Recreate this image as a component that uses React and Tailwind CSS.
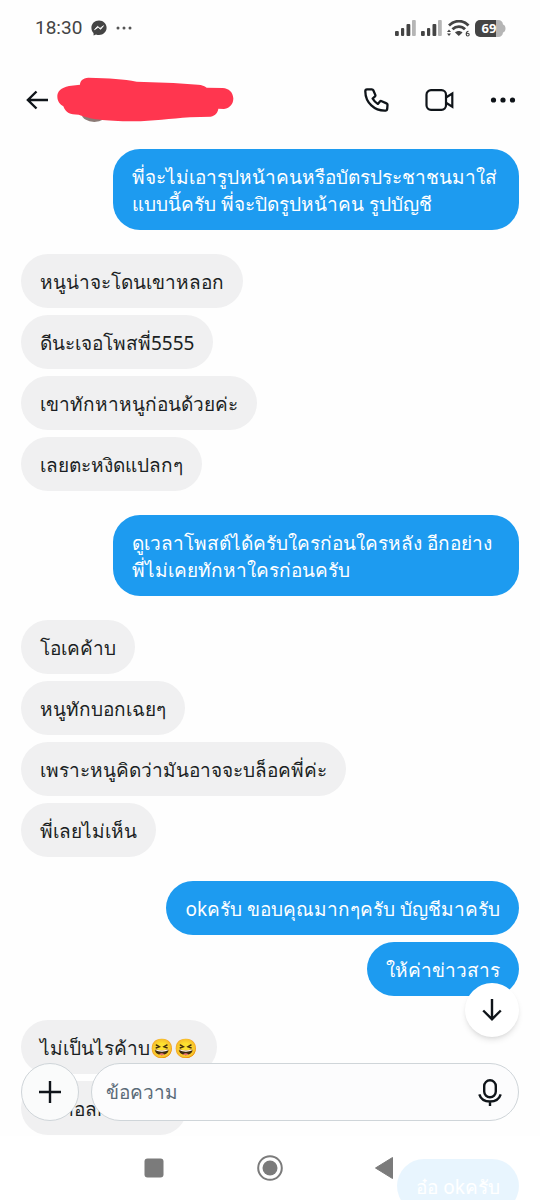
import React from "react";

const groups = [
  { mine: true, items: [["พี่จะไม่เอารูปหน้าคนหรือบัตรประชาชนมาใส่", "แบบนี้ครับ พี่จะปิดรูปหน้าคน รูปบัญชี"]] },
  { mine: false, items: [["หนูน่าจะโดนเขาหลอก"], ["ดีนะเจอโพสพี่5555"], ["เขาทักหาหนูก่อนด้วยค่ะ"], ["เลยตะหงิดแปลกๆ"]] },
  { mine: true, items: [["ดูเวลาโพสต์ได้ครับใครก่อนใครหลัง อีกอย่าง", "พี่ไม่เคยทักหาใครก่อนครับ"]] },
  { mine: false, items: [["โอเคค้าบ"], ["หนูทักบอกเฉยๆ"], ["เพราะหนูคิดว่ามันอาจจะบล็อคพี่ค่ะ"], ["พี่เลยไม่เห็น"]] },
  { mine: true, items: [["okครับ ขอบคุณมากๆครับ บัญชีมาครับ"], ["ให้ค่าข่าวสาร"]] },
  { mine: false, items: [["ไม่เป็นไรค้าบ😆😆"], ["รบกอลกันนะคะ"]] },
  { mine: true, items: [["อ๋อ okครับ"]] },
];

function Bubble({ mine, lines }) {
  const side = mine ? "self-end bg-[#1d9bf0] text-white" : "self-start bg-[#f0f0f1] text-[#1b1f23]";
  const width = lines.length > 1 ? "w-full max-w-[406px]" : "max-w-full";
  return (
    <li className={`rounded-[27px] px-[19px] pt-[15px] pb-3 whitespace-nowrap ${side} ${width}`}>
      {lines.map((line) => (
        <p key={line}>{line}</p>
      ))}
    </li>
  );
}

function Signal() {
  return (
    <svg viewBox="0 0 21 17" className="h-[17px] w-[21px]" fill="#444">
      <rect x="0" y="11" width="3.800" height="5" rx="1" />
      <rect x="6" y="8" width="3.200" height="8" rx="1" />
      <rect x="11.500" y="4" width="3.800" height="12" rx="1" />
      <rect x="17" y="0" width="3.800" height="16" rx="1" fill="#b5b5b5" />
    </svg>
  );
}

function StatusBar() {
  return (
    <div className="flex h-14 items-center pr-[34px] pl-[35px]">
      <span className="font-['Roboto',sans-serif] text-[19px] leading-6 text-[#444]">18:30</span>
      <svg viewBox="0 0 16 16" className="ml-[9px] size-4" role="img" aria-label="Messenger">
        <path d="M8 .5C3.600.5.4 3.700.4 7.800c0 2.200.8 3.900 2.100 5.200l.1 2.500 2.400-1c1 .4 2 .5 3 .5 4.400 0 7.600-3.200 7.600-7.200S12.400.5 8 .5z" fill="#444" />
        <path d="M3.500 9.700 6.500 6.300 9 8.400 12.500 5.700 9.700 9.300 7.200 7.300z" fill="#fff" stroke="#fff" strokeWidth=".8" strokeLinejoin="round" />
      </svg>
      <svg viewBox="0 0 16 4" className="ml-[9px] h-1 w-4" fill="#555">
        <circle cx="2" cy="2" r="1.500" />
        <circle cx="8" cy="2" r="1.500" />
        <circle cx="14" cy="2" r="1.500" />
      </svg>
      <div className="ml-auto flex items-center gap-[5px]">
        <Signal />
        <Signal />
        <svg viewBox="0 0 23 17" className="h-[17px] w-[23px]">
          <path d="M2 5.500C8-.3 16-.3 21.500 5.500" fill="none" stroke="#444" strokeWidth="2.800" />
          <path d="M5.500 9.300c3.700-3.700 9-3.700 12.500 0" fill="none" stroke="#444" strokeWidth="2.800" />
          <path d="M8 12.500c2-2 5.500-2 7.500 0L11.800 16z" fill="#444" />
          <path d="M0 12 2 9.500 4 12zM0 13.500h4L2 16z" fill="#444" />
          <path d="M21.500 11.200c-1.800 0-2.300 1.300-2.300 3 0 1.300.6 1.800 1.500 1.800s1.500-.5 1.500-1.400-.6-1.300-1.400-1.300-1.400.3-1.500 1" fill="none" stroke="#444" strokeWidth="1.100" />
        </svg>
        <svg viewBox="0 0 31 17" className="h-[17px] w-[31px]" role="img" aria-label="69">
          <path d="M5 0h16v17H5a5 5 0 0 1-5-5V5a5 5 0 0 1 5-5z" fill="#444" />
          <path d="M21 0h2a5 5 0 0 1 5 4.500c1.500.4 2.500 1.500 2.500 4s-1 3.600-2.500 4a5 5 0 0 1-5 4.500h-2z" fill="#b5b5b5" />
          <text x="14" y="13" textAnchor="middle" fontSize="13" fontWeight="700" fontFamily="Open Sans, sans-serif" fill="#fff">69</text>
        </svg>
      </div>
    </div>
  );
}

function Header() {
  return (
    <header className="flex h-[88px] items-center pr-6 pl-[26px]">
      <button aria-label="Back">
        <svg viewBox="0 0 23 20" className="h-5 w-[23px]" fill="none" stroke="#0f1419" strokeWidth="2.400">
          <path d="M22 10H2M10.500 1.500 1.900 10l8.600 8.500" />
        </svg>
      </button>
      <svg viewBox="171 228 531 138" className="ml-2 h-[46px] w-[177px]">
        <ellipse cx="283" cy="338" rx="38" ry="25" fill="#8b7b76" />
        <path d="M265 230C248 231 240 240 240 251L207 255C183 260 171 272 172 288C173 303 180 310 190 316C197 336 210 341 236 341C270 354 310 360 400 361C460 361 510 353 570 349L632 347C647 343 653 335 655 323L672 324C691 321 700 309 700 292C698 272 687 263 668 261L620 260C613 254 606 252 594 251L520 246L410 242C370 234 330 232 265 230Z" fill="#ff364f" />
      </svg>
      <div className="ml-auto flex items-center">
        <button aria-label="Voice call">
          <svg viewBox="0 0 25 24" className="h-6 w-[25px]" fill="none" stroke="#0f1419" strokeWidth="2.300" strokeLinejoin="round">
            <path d="M3 1.300h4.800c.8 0 1.200.3 1.500 1l2 4.600c.3.700.1 1.200-.5 1.700L8.600 10.500c1.200 2.200 2.900 4 5.300 5.400l2-2.300c.5-.6 1.100-.7 1.800-.4l4.800 2.200c.7.300 1.100.8 1 1.600l-.3 4c-.1.900-.6 1.500-1.500 1.600C10.500 23.100 1.400 14.700 1.300 3.200c0-1.200.6-1.900 1.700-1.900z" />
          </svg>
        </button>
        <button aria-label="Video call" className="ml-9">
          <svg viewBox="0 0 29 22" className="h-[22px] w-[29px]" fill="none" stroke="#0f1419" strokeWidth="2.200">
            <rect x="1.500" y="1.200" width="19.500" height="19.600" rx="4.500" />
            <path d="M21 8.500 27.300 4.500V17.700L21 13.700" />
          </svg>
        </button>
        <button aria-label="More" className="ml-9">
          <svg viewBox="0 0 26 6" className="h-[6px] w-[26px]" fill="#0f1419">
            <circle cx="3.500" cy="3" r="2.600" />
            <circle cx="13" cy="3" r="2.600" />
            <circle cx="22.500" cy="3" r="2.600" />
          </svg>
        </button>
      </div>
    </header>
  );
}

function Footer() {
  return (
    <footer className="absolute inset-x-0 bottom-0">
      <div className="flex justify-end px-[21px]">
        <button aria-label="Scroll to latest" className="flex size-[54px] items-center justify-center rounded-full bg-white shadow-md">
          <svg viewBox="0 0 20 22" className="h-[22px] w-5" fill="none" stroke="#0f1419" strokeWidth="2.400">
            <path d="M10 0v20M1.200 11.500l8.800 8.700 8.800-8.700" />
          </svg>
        </button>
      </div>
      <form className="mt-[26px] flex gap-3 px-[21px]" onSubmit={(e) => e.preventDefault()}>
        <button type="button" aria-label="Add attachment" className="flex size-[58px] shrink-0 items-center justify-center rounded-full border border-[#cfd5d9] bg-[#fafbfb]">
          <svg viewBox="0 0 22 22" className="size-[22px]" stroke="#0f1419" strokeWidth="2.400">
            <path d="M11 0v22M0 11h22" />
          </svg>
        </button>
        <div className="flex h-[58px] min-w-0 flex-1 items-center rounded-full border border-[#cfd5d9] bg-[#fcfcfd] pr-4 pl-[14px]">
          <input
            type="text"
            aria-label="ข้อความ"
            placeholder="ข้อความ"
            className="min-w-0 flex-1 bg-transparent leading-[27px] text-[#1b1f23] outline-none placeholder:text-[#5b6b78]"
          />
          <button type="button" aria-label="Record voice message">
            <svg viewBox="0 0 24 27" className="h-[27px] w-6" fill="none" stroke="#0f1419" strokeWidth="2.400">
              <rect x="6.200" y="1.300" width="11.600" height="17" rx="5.800" />
              <path d="M1.300 15.300c1.500 4.700 5.500 7.200 10.700 7.200s9.200-2.500 10.700-7.200M12 22.500V27" />
            </svg>
          </button>
        </div>
      </form>
      <nav className="mt-[15px] flex h-16 items-center justify-center gap-[88px] bg-white/90">
        <button aria-label="Recent apps">
          <svg viewBox="0 0 28 28" className="size-7" fill="#7b7b7b">
            <rect x="4.500" y="4.500" width="19" height="19" rx="3" />
          </svg>
        </button>
        <button aria-label="Home">
          <svg viewBox="0 0 28 28" className="size-7">
            <circle cx="14" cy="14" r="11.800" fill="none" stroke="#7b7b7b" strokeWidth="2" />
            <circle cx="14" cy="14" r="7.500" fill="#7b7b7b" />
          </svg>
        </button>
        <button aria-label="Navigate back">
          <svg viewBox="0 0 28 28" className="size-7" fill="#7b7b7b">
            <path d="M20.500 3.500v21L3.500 14z" stroke="#7b7b7b" strokeLinejoin="round" />
          </svg>
        </button>
      </nav>
    </footer>
  );
}

export default function App() {
  return (
    <div lang="th" className="relative flex h-screen flex-col overflow-hidden bg-[#fefefe] font-['Noto_Sans','Liberation_Sans',sans-serif] text-[19px] leading-[27px]">
      <StatusBar />
      <Header />
      <main className="flex min-h-0 flex-1 flex-col gap-6 overflow-hidden px-[21px] pt-[5px]">
        {groups.map((group, g) => (
          <ul key={g} className="flex shrink-0 flex-col gap-[7px]">
            {group.items.map((lines) => (
              <Bubble key={lines[0]} mine={group.mine} lines={lines} />
            ))}
          </ul>
        ))}
      </main>
      <Footer />
    </div>
  );
}
